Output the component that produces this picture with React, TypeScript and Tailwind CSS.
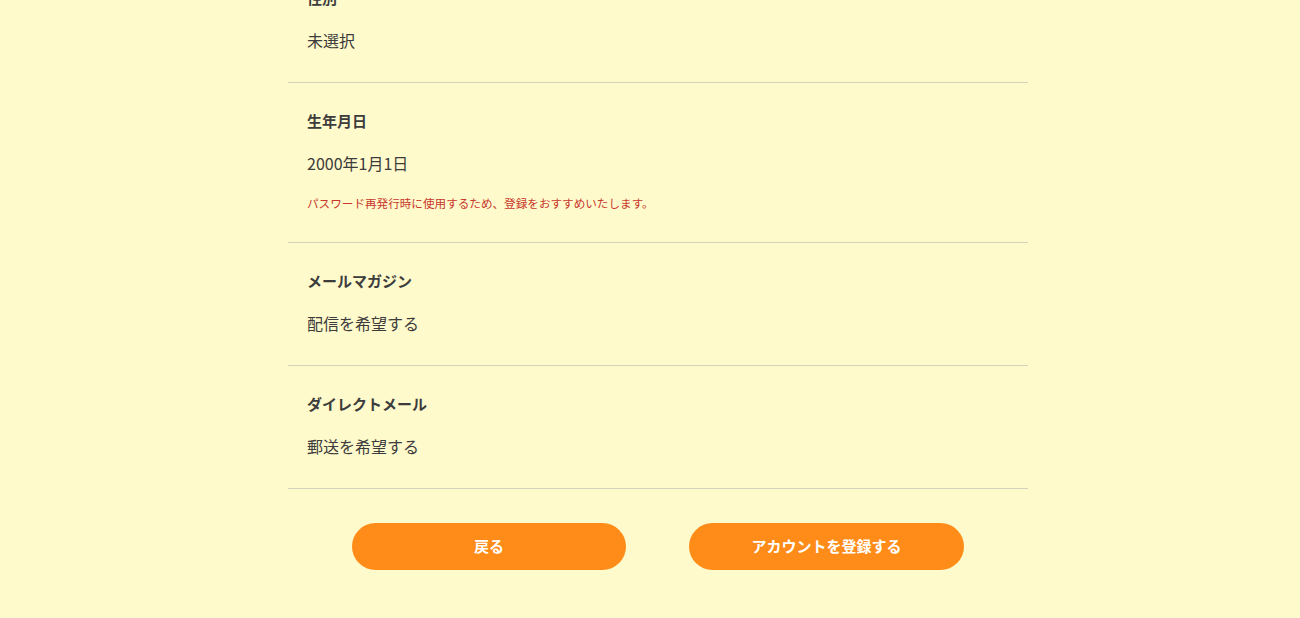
import React from 'react'

type Row = { label: string; value: string; note?: string }

const rows: Row[] = [
  { label: '性別', value: '未選択' },
  { label: '生年月日', value: '2000年1月1日', note: 'パスワード再発行時に使用するため、登録をおすすめいたします。' },
  { label: 'メールマガジン', value: '配信を希望する' },
  { label: 'ダイレクトメール', value: '郵送を希望する' },
]

function ConfirmRow({ row }: { row: Row }) {
  return (
    <div className="border-b border-[#d4d1bd] px-[19px] pt-[28px] pb-[30px]">
      <p className="text-[15px] leading-[20px] font-bold text-[#3c3c3c]">{row.label}</p>
      <p className="mt-[20px] text-[16px] leading-[24px] text-[#3c3c3c]">{row.value}</p>
      {row.note && (
        <p className="mt-[19px] text-[11.6px] leading-[18px] text-[#c8372d]">{row.note}</p>
      )}
    </div>
  )
}

export default function App() {
  return (
    <div
      className="h-[618px] overflow-hidden bg-[#fffacb] pl-[16px]"
      style={{ fontFamily: '"Noto Sans CJK JP", "Noto Sans", sans-serif' }}
    >
      <div className="mx-auto -mt-[40px] w-[740px]">
        {rows.map(r => (
          <ConfirmRow key={r.label} row={r} />
        ))}
        <div className="flex justify-center gap-[63px] pt-[34px]">
          <button
            type="button"
            className="h-[47px] w-[274px] rounded-full bg-[#ff8c19] text-[15px] font-bold text-white"
          >
            戻る
          </button>
          <button
            type="button"
            className="h-[47px] w-[275px] rounded-full bg-[#ff8c19] text-[15px] font-bold text-white"
          >
            アカウントを登録する
          </button>
        </div>
      </div>
    </div>
  )
}
